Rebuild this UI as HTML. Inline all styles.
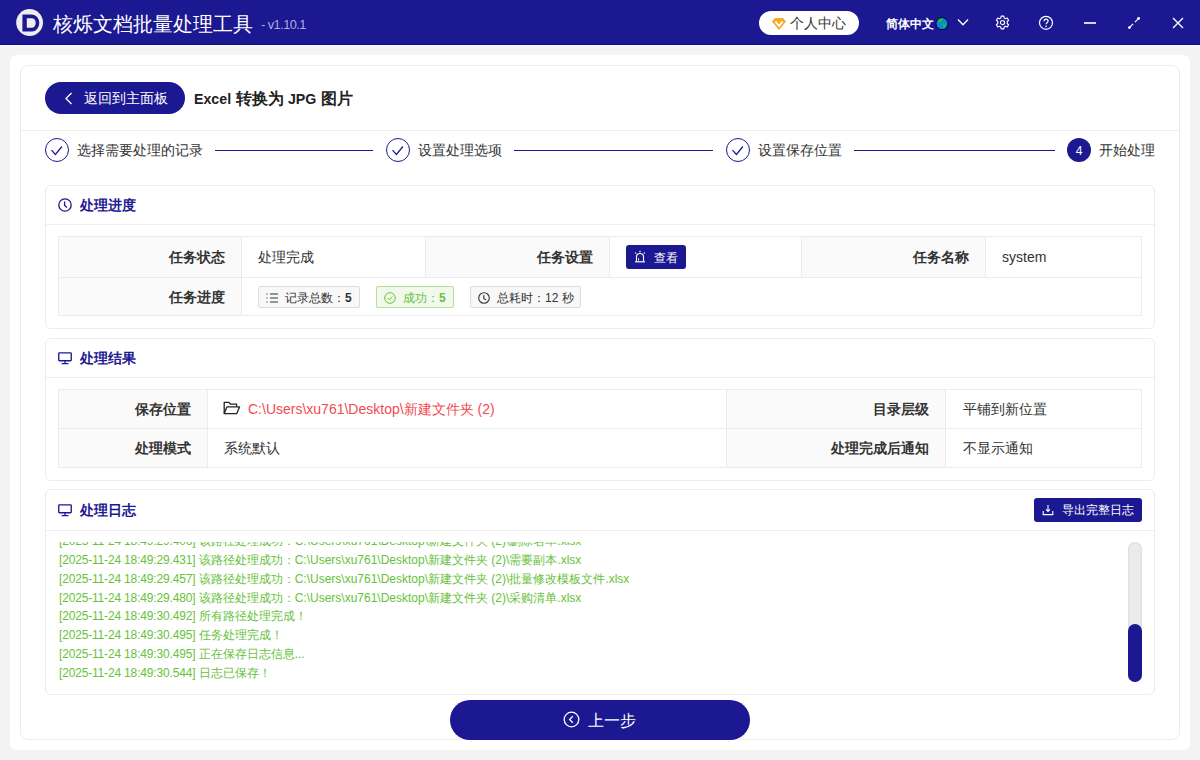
<!DOCTYPE html>
<html><head><meta charset="utf-8">
<style>
*{box-sizing:border-box;margin:0;padding:0}
html,body{width:1200px;height:760px;overflow:hidden}
body{background:#f3f3f3;font-family:"Liberation Sans",sans-serif;color:#333;position:relative}
.abs{position:absolute}
.hdr{left:0;top:0;width:1200px;height:45px;background:#1c1892;border-bottom:1px solid #0c088a}
.hdrline{left:0;top:45px;width:1200px;height:1px;background:#fcfcf7}
.t{position:absolute;white-space:nowrap;line-height:1}
.outer{left:10px;top:55px;width:1180px;height:695px;background:#fff;border-radius:7px}
.inner{left:20px;top:65px;width:1160px;height:675px;border:1px solid #ececec;border-radius:8px;background:#fff}
.navy{background:#1c1892}
.card{position:absolute;left:45px;width:1110px;border:1px solid #ebebeb;border-radius:6px;background:#fff}
.cdiv{position:absolute;left:0;width:100%;height:1px;background:#eeeeee}
.tbl{position:absolute;left:12px;border:1px solid #ebebeb}
.cell{position:absolute;top:0;height:100%}
.lab{background:#fafafa}
.vb{position:absolute;left:0;top:0;bottom:0;width:1px;background:#ebebeb}
.hb{position:absolute;left:0;right:0;height:1px;background:#ebebeb}
.ts{letter-spacing:-0.17px}
.lbl{font-weight:bold;font-size:14px;color:#333}
</style></head><body>
<!-- header -->
<div class="abs hdr"></div>
<div class="abs hdrline"></div>
<svg class="abs" style="left:16px;top:9px" width="27" height="27" viewBox="0 0 27 27">
 <circle cx="13.6" cy="13.5" r="13.4" fill="#eeeeee"/>
 <path d="M6.9 5.4 H16 A7.3 8.6 0 0 1 16 22.6 H6.9 Q6.4 22.6 6.4 22.1 V5.9 Q6.4 5.4 6.9 5.4 Z M10.8 9.2 V18.8 H15.7 A4 4.8 0 0 0 15.7 9.2 Z" fill="#1c1892" fill-rule="evenodd"/>
</svg>
<div class="t" style="left:53px;top:14px;font-size:20px;color:#fff">核烁文档批量处理工具</div>
<div class="t" style="left:261px;top:19px;font-size:12.8px;letter-spacing:-0.55px;color:#b0aedb">- v1.10.1</div>

<div class="abs" style="left:759px;top:11px;width:100px;height:24px;border-radius:12px;background:#fff"></div>
<svg class="abs" style="left:771px;top:17px" width="16" height="14" viewBox="0 0 16 14">
 <path d="M4.1 0.9 H12 L15 4.6 L8 12.9 L1 4.6 Z" fill="#f7a829"/>
 <path d="M4.4 4.6 L8 8.9 L11.6 4.6" stroke="#fff" stroke-width="1.7" fill="none"/>
</svg>
<div class="t" style="left:790px;top:16px;font-size:14px;color:#333">个人中心</div>
<div class="t" style="left:886px;top:18px;font-size:12px;color:#fff;font-weight:bold">简体中文</div>
<svg class="abs" style="left:935px;top:17px" width="14" height="14" viewBox="0 0 14 14">
 <circle cx="7" cy="6.7" r="6" fill="#0d85e2" stroke="#050520" stroke-width="1"/>
 <path d="M3.2 3 C4.5 1.4 7 1.2 8.3 1.6 C8.6 2.6 7.8 3.2 7 3.6 C6.2 4.2 6.6 5.2 5.6 5.6 C4.6 6 4 5.4 3.6 4.6 Z" fill="#22c420"/>
 <path d="M8.4 6.3 C9.6 6.2 10.6 7 10.6 8.2 C10.4 9.8 9.4 11 8.6 11.8 C8.2 10.6 8.4 9.4 7.8 8.6 C7.4 7.6 7.6 6.6 8.4 6.3 Z" fill="#22c420"/>
</svg>
<svg class="abs" style="left:957px;top:18px" width="12" height="9" viewBox="0 0 12 9">
 <path d="M1 1.5 L6 6.8 L11 1.5" stroke="#fff" stroke-width="1.3" fill="none"/>
</svg>
<!-- gear -->
<svg class="abs" style="left:994.5px;top:15.3px" width="15" height="15" viewBox="0 0 16 16">
 <path d="M6.6 1.2 H9.4 L9.8 3.1 L11.3 3.9 L13.1 3.2 L14.5 5.6 L13 6.9 V9.1 L14.5 10.4 L13.1 12.8 L11.3 12.1 L9.8 12.9 L9.4 14.8 H6.6 L6.2 12.9 L4.7 12.1 L2.9 12.8 L1.5 10.4 L3 9.1 V6.9 L1.5 5.6 L2.9 3.2 L4.7 3.9 L6.2 3.1 Z" stroke="#fff" stroke-width="1.2" fill="none" stroke-linejoin="round"/>
 <circle cx="8" cy="8" r="2.2" stroke="#fff" stroke-width="1.2" fill="none"/>
</svg>
<!-- help -->
<svg class="abs" style="left:1038px;top:15px" width="16" height="16" viewBox="0 0 16 16">
 <circle cx="8" cy="7.8" r="6.5" stroke="#fff" stroke-width="1.2" fill="none"/>
 <path d="M5.9 6.2 C5.9 4.9 6.9 4.1 8 4.1 C9.2 4.1 10.1 4.9 10.1 6 C10.1 7.4 8.1 7.6 8.1 9.3" stroke="#fff" stroke-width="1.2" fill="none"/>
 <circle cx="8.1" cy="11.4" r="0.8" fill="#fff"/>
</svg>
<div class="abs" style="left:1084px;top:22px;width:12px;height:2px;background:#d6d4ee"></div>
<svg class="abs" style="left:1127px;top:16px" width="14" height="14" viewBox="0 0 14 14">
 <path d="M2.6 11.4 L6.1 7.9 M7.9 6.1 L11.4 2.6" stroke="#fff" stroke-width="1.2"/>
 <circle cx="2.4" cy="11.6" r="1.4" fill="#fff"/>
 <circle cx="11.6" cy="2.4" r="1.4" fill="#fff"/>
</svg>
<svg class="abs" style="left:1172px;top:17px" width="12" height="12" viewBox="0 0 12 12">
 <path d="M1 1 L11 11 M11 1 L1 11" stroke="#fff" stroke-width="1.4"/>
</svg>

<!-- outer panels -->
<div class="abs outer"></div>
<div class="abs inner"></div>

<!-- back button -->
<div class="abs navy" style="left:45px;top:82px;width:140px;height:32px;border-radius:16px"></div>
<svg class="abs" style="left:64px;top:92px" width="9" height="13" viewBox="0 0 9 13">
 <path d="M7.5 1 L2 6.5 L7.5 12" stroke="#fff" stroke-width="1.3" fill="none"/>
</svg>
<div class="t" style="left:84px;top:91px;font-size:14px;color:#fff">返回到主面板</div>
<div class="t" style="left:194px;top:91px;font-size:16px;color:#222;font-weight:bold"><span style="font-size:14.2px">Excel</span> 转换为 <span style="font-size:14.2px">JPG</span> 图片</div>

<div class="abs" style="left:21px;top:130px;width:1158px;height:1px;background:#eeeeee"></div>

<!-- steps -->
<svg class="abs" style="left:45px;top:138px" width="24" height="24" viewBox="0 0 24 24">
 <circle cx="12" cy="12" r="11.5" stroke="#1c1892" stroke-width="1" fill="#fff"/>
 <path d="M6.5 12.2 L10.4 16.5 L16.9 8.5" stroke="#1c1892" stroke-width="1.25" fill="none"/>
</svg>
<div class="t" style="left:77px;top:143px;font-size:14px;color:#333">选择需要处理的记录</div>
<div class="abs" style="left:215px;top:150px;width:158px;height:1px;background:#1c1892"></div>
<svg class="abs" style="left:386px;top:138px" width="24" height="24" viewBox="0 0 24 24">
 <circle cx="12" cy="12" r="11.5" stroke="#1c1892" stroke-width="1" fill="#fff"/>
 <path d="M6.5 12.2 L10.4 16.5 L16.9 8.5" stroke="#1c1892" stroke-width="1.25" fill="none"/>
</svg>
<div class="t" style="left:418px;top:143px;font-size:14px;color:#333">设置处理选项</div>
<div class="abs" style="left:514px;top:150px;width:199px;height:1px;background:#1c1892"></div>
<svg class="abs" style="left:726px;top:138px" width="24" height="24" viewBox="0 0 24 24">
 <circle cx="12" cy="12" r="11.5" stroke="#1c1892" stroke-width="1" fill="#fff"/>
 <path d="M6.5 12.2 L10.4 16.5 L16.9 8.5" stroke="#1c1892" stroke-width="1.25" fill="none"/>
</svg>
<div class="t" style="left:758px;top:143px;font-size:14px;color:#333">设置保存位置</div>
<div class="abs" style="left:854px;top:150px;width:201px;height:1px;background:#1c1892"></div>
<div class="abs navy" style="left:1067px;top:138px;width:24px;height:24px;border-radius:12px"></div>
<div class="t" style="left:1067px;width:24px;text-align:center;top:145px;font-size:12px;color:#fff">4</div>
<div class="t" style="left:1099px;top:143px;font-size:14px;color:#333">开始处理</div>

<!-- card 1 -->
<div class="card" style="top:185px;height:144px"><div class="cdiv" style="top:38px"></div></div>
<svg class="abs" style="left:58px;top:198px" width="14" height="14" viewBox="0 0 14 14">
 <circle cx="7" cy="7" r="6.2" stroke="#1c1892" stroke-width="1.3" fill="none"/>
 <path d="M6.6 3.6 V7.4 L9 9.4" stroke="#1c1892" stroke-width="1.3" fill="none"/>
</svg>
<div class="t" style="left:80px;top:198px;font-size:14px;color:#1c1892;font-weight:bold">处理进度</div>
<div class="abs" style="left:58px;top:236px;width:1084px;height:80px;border:1px solid #ebebeb;background:#fff">
 <div class="abs lab" style="left:0;top:0;width:183px;height:78px"></div>
 <div class="abs lab" style="left:367px;top:0;width:183px;height:40px"></div>
 <div class="abs lab" style="left:743px;top:0;width:183px;height:40px"></div>
 <div class="abs" style="left:182px;top:0;width:1px;height:78px;background:#ebebeb"></div>
 <div class="abs" style="left:366px;top:0;width:1px;height:40px;background:#ebebeb"></div>
 <div class="abs" style="left:550px;top:0;width:1px;height:40px;background:#ebebeb"></div>
 <div class="abs" style="left:742px;top:0;width:1px;height:40px;background:#ebebeb"></div>
 <div class="abs" style="left:926px;top:0;width:1px;height:40px;background:#ebebeb"></div>
 <div class="abs" style="left:0;top:40px;width:1082px;height:1px;background:#ebebeb"></div>
</div>
<div class="t lbl" style="left:0;width:225px;text-align:right;top:250px">任务状态</div>
<div class="t" style="left:258px;top:250px;font-size:14px;color:#333">处理完成</div>
<div class="t lbl" style="left:0;width:593px;text-align:right;top:250px">任务设置</div>
<div class="abs navy" style="left:626px;top:245px;width:60px;height:24px;border-radius:3px"></div>
<svg class="abs" style="left:634px;top:250px" width="12" height="13" viewBox="0 0 12 13">
 <path d="M2.5 11 V7 A3.5 3.5 0 0 1 9.5 7 V11" stroke="#fff" stroke-width="1.1" fill="none"/>
 <path d="M1 11.8 H11" stroke="#fff" stroke-width="1.2"/>
 <path d="M6 0.8 V2.4 M1.2 2.6 L2.2 3.6 M10.8 2.6 L9.8 3.6" stroke="#fff" stroke-width="1.1"/>
 <path d="M4.6 10.5 V8.2" stroke="#fff" stroke-width="0.9"/>
</svg>
<div class="t" style="left:654px;top:252px;font-size:12px;color:#fff">查看</div>
<div class="t lbl" style="left:0;width:969px;text-align:right;top:250px">任务名称</div>
<div class="t" style="left:1002px;top:250px;font-size:14px;color:#333">system</div>
<div class="t lbl" style="left:0;width:225px;text-align:right;top:290px">任务进度</div>

<div class="abs" style="left:258px;top:286px;width:102px;height:22px;border:1px solid #dcdcdc;border-radius:2px;background:#f8f8f8"></div>
<svg class="abs" style="left:266px;top:292px" width="13" height="12" viewBox="0 0 13 12">
 <path d="M4 2 H12 M4 6 H12 M4 10 H12" stroke="#333" stroke-width="1"/>
 <path d="M1 1.5 V2.5 M1 5.5 V6.5 M1 9.5 V10.5" stroke="#333" stroke-width="1.2"/>
</svg>
<div class="t" style="left:285px;top:292px;font-size:12px;color:#333">记录总数：<b>5</b></div>

<div class="abs" style="left:376px;top:286px;width:78px;height:22px;border:1px solid #b3e19d;border-radius:2px;background:#f0f9eb"></div>
<svg class="abs" style="left:384px;top:292px" width="12" height="12" viewBox="0 0 12 12">
 <circle cx="6" cy="6" r="5.3" stroke="#67c23a" stroke-width="1" fill="none"/>
 <path d="M3.6 6.1 L5.3 7.8 L8.4 4.5" stroke="#67c23a" stroke-width="1" fill="none"/>
</svg>
<div class="t" style="left:403px;top:292px;font-size:12px;color:#67c23a">成功：<b>5</b></div>

<div class="abs" style="left:470px;top:286px;width:111px;height:22px;border:1px solid #dcdcdc;border-radius:2px;background:#f8f8f8"></div>
<svg class="abs" style="left:478px;top:292px" width="12" height="12" viewBox="0 0 12 12">
 <circle cx="6" cy="6" r="5.3" stroke="#333" stroke-width="1.1" fill="none"/>
 <path d="M5.8 3 V6.4 L7.9 8" stroke="#333" stroke-width="1.1" fill="none"/>
</svg>
<div class="t" style="left:497px;top:292px;font-size:12px;color:#333">总耗时：12 秒</div>
<!-- card 2 -->
<div class="card" style="top:338px;height:143px"><div class="cdiv" style="top:38px"></div></div>
<svg class="abs" style="left:58px;top:352px" width="14" height="14" viewBox="0 0 14 14">
 <rect x="0.75" y="0.8" width="12.5" height="7.9" rx="0.8" stroke="#1c1892" stroke-width="1.35" fill="none"/>
 <path d="M7 8.7 V11.4 M3.6 11.7 H10.4" stroke="#1c1892" stroke-width="1.3"/>
</svg>
<div class="t" style="left:80px;top:351px;font-size:14px;color:#1c1892;font-weight:bold">处理结果</div>
<div class="abs" style="left:58px;top:389px;width:1084px;height:79px;border:1px solid #ebebeb;background:#fff">
 <div class="abs lab" style="left:0;top:0;width:148px;height:77px"></div>
 <div class="abs lab" style="left:668px;top:0;width:218px;height:77px"></div>
 <div class="abs" style="left:148px;top:0;width:1px;height:77px;background:#ebebeb"></div>
 <div class="abs" style="left:667px;top:0;width:1px;height:77px;background:#ebebeb"></div>
 <div class="abs" style="left:886px;top:0;width:1px;height:77px;background:#ebebeb"></div>
 <div class="abs" style="left:0;top:38px;width:1082px;height:1px;background:#ebebeb"></div>
</div>
<div class="t lbl" style="left:0;width:191px;text-align:right;top:402px">保存位置</div>
<svg class="abs" style="left:223px;top:401px" width="18" height="14" viewBox="0 0 18 14">
 <path d="M1.2 12.6 V1.4 H6 L7.6 3.2 H13.6 V5.6" stroke="#222" stroke-width="1.3" fill="none" stroke-linejoin="round"/>
 <path d="M1.2 12.6 L4 5.8 H16.6 L13.8 12.6 Z" stroke="#222" stroke-width="1.3" fill="none" stroke-linejoin="round"/>
</svg>
<div class="t" style="left:248px;top:402px;font-size:14px;color:#f34b50">C:\Users\xu761\Desktop\新建文件夹 (2)</div>
<div class="t lbl" style="left:0;width:929px;text-align:right;top:402px">目录层级</div>
<div class="t" style="left:963px;top:402px;font-size:14px;color:#333">平铺到新位置</div>
<div class="t lbl" style="left:0;width:191px;text-align:right;top:441px">处理模式</div>
<div class="t" style="left:224px;top:441px;font-size:14px;color:#333">系统默认</div>
<div class="t lbl" style="left:0;width:929px;text-align:right;top:441px">处理完成后通知</div>
<div class="t" style="left:963px;top:441px;font-size:14px;color:#333">不显示通知</div>
<!-- card 3 -->
<div class="card" style="top:489px;height:206px"><div class="cdiv" style="top:40px"></div></div>
<svg class="abs" style="left:58px;top:504px" width="14" height="14" viewBox="0 0 14 14">
 <rect x="0.75" y="0.8" width="12.5" height="7.9" rx="0.8" stroke="#1c1892" stroke-width="1.35" fill="none"/>
 <path d="M7 8.7 V11.4 M3.6 11.7 H10.4" stroke="#1c1892" stroke-width="1.3"/>
</svg>
<div class="t" style="left:80px;top:503px;font-size:14px;color:#1c1892;font-weight:bold">处理日志</div>
<div class="abs navy" style="left:1034px;top:498px;width:108px;height:24px;border-radius:3px"></div>
<svg class="abs" style="left:1042px;top:504px" width="12" height="12" viewBox="0 0 12 12">
 <path d="M6 1 V7.4 M4 5.4 L6 7.4 L8 5.4" stroke="#fff" stroke-width="1.1" fill="none"/>
 <path d="M1.2 7 V10.6 H10.8 V7" stroke="#fff" stroke-width="1.1" fill="none"/>
</svg>
<div class="t" style="left:1062px;top:504px;font-size:12px;color:#fff">导出完整日志</div>
<div class="abs" style="left:58px;top:542px;width:1060px;height:141px;overflow:hidden">
 <div class="abs log" style="left:1px;top:-10px;font-size:12px;line-height:18.86px;color:#67c23a;white-space:nowrap">
<span class="ts">[2025-11-24 18:49:29.406]</span> 该路径处理成功：C:\Users\xu761\Desktop\新建文件夹 (2)\删除名单.xlsx<br>
<span class="ts">[2025-11-24 18:49:29.431]</span> 该路径处理成功：C:\Users\xu761\Desktop\新建文件夹 (2)\需要副本.xlsx<br>
<span class="ts">[2025-11-24 18:49:29.457]</span> 该路径处理成功：C:\Users\xu761\Desktop\新建文件夹 (2)\批量修改模板文件.xlsx<br>
<span class="ts">[2025-11-24 18:49:29.480]</span> 该路径处理成功：C:\Users\xu761\Desktop\新建文件夹 (2)\采购清单.xlsx<br>
<span class="ts">[2025-11-24 18:49:30.492]</span> 所有路径处理完成！<br>
<span class="ts">[2025-11-24 18:49:30.495]</span> 任务处理完成！<br>
<span class="ts">[2025-11-24 18:49:30.495]</span> 正在保存日志信息...<br>
<span class="ts">[2025-11-24 18:49:30.544]</span> 日志已保存！
 </div>
</div>
<div class="abs" style="left:1128px;top:542px;width:14px;height:140px;border-radius:7px;background:#ebebeb;box-shadow:inset 0 0 3px rgba(0,0,0,0.12)"></div>
<div class="abs navy" style="left:1128px;top:624px;width:14px;height:58px;border-radius:7px"></div>

<!-- prev button -->
<div class="abs navy" style="left:450px;top:700px;width:300px;height:40px;border-radius:20px"></div>
<svg class="abs" style="left:563px;top:711px" width="17" height="17" viewBox="0 0 17 17">
 <circle cx="8.5" cy="8.5" r="7.3" stroke="#fff" stroke-width="1.3" fill="none"/>
 <path d="M9.8 5.3 L6.6 8.5 L9.8 11.7" stroke="#fff" stroke-width="1.3" fill="none"/>
</svg>
<div class="t" style="left:588px;top:713px;font-size:16px;color:#fff">上一步</div>
</body></html>
